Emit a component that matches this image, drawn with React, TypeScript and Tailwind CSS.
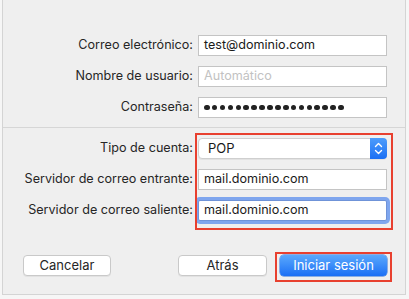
import React from "react";

const FONT = { fontFamily: "Inter, 'Liberation Sans', sans-serif" };

function Row({ label, children }: { label: string; children: React.ReactNode }) {
  return (
    <div className="flex items-center h-[21px]">
      <div className="w-[195px] text-right pr-[5px] text-[12.6px] text-[#262626] leading-none">{label}</div>
      {children}
    </div>
  );
}

function Field({ value, placeholder }: { value?: string; placeholder?: string }) {
  return (
    <div className="w-[189px] h-[21px] bg-white border border-[#c4c4c4] flex items-center px-[5px] text-[12.6px] leading-none">
      {value ? (
        <span className="text-[#1a1a1a]">{value}</span>
      ) : (
        <span className="text-[#c2c2c2]">{placeholder}</span>
      )}
    </div>
  );
}

function Button({ label, primary }: { label: string; primary?: boolean }) {
  return (
    <div
      className={
        primary
          ? "h-[21px] rounded-[4px] bg-gradient-to-b from-[#5aa8fc] to-[#1b6ff5] text-white text-[13px] flex items-center justify-center shadow-[0_0_0_0.5px_#2a6fd8]"
          : "h-[21px] rounded-[4px] bg-white border border-[#c9c9c9] text-[#262626] text-[13px] flex items-center justify-center shadow-[0_1px_0_rgba(0,0,0,0.05)]"
      }
    >
      {label}
    </div>
  );
}

export default function App() {
  return (
    <div style={FONT} className="w-[409px] h-[299px] bg-[#f6f6f6] pl-[2px] pr-[3px] pb-[4px]">
      <div className="h-full bg-[#efefef] border-x border-b border-[#d4d4d4] flex flex-col">
        {/* account */}
        <div className="pt-[35px] pb-[9px] flex flex-col gap-[10px] border-b border-[#d6d6d6]">
          <Row label="Correo electrónico:">
            <Field value="test@dominio.com" />
          </Row>
          <Row label="Nombre de usuario:">
            <Field placeholder="Automático" />
          </Row>
          <Row label="Contraseña:">
            <div className="w-[189px] h-[21px] bg-white border border-[#c4c4c4] flex items-center px-[5px] gap-[2.3px]">
              {Array.from({ length: 18 }).map((_, i) => (
                <span key={i} className="w-[5.6px] h-[5.6px] rounded-full bg-[#222]" />
              ))}
            </div>
          </Row>
        </div>

        {/* servers */}
        <div className="relative pt-[10px] flex flex-col gap-[10px]">
          <Row label="Tipo de cuenta:">
            <div className="w-[189px] h-[21px] bg-white rounded-[4px] border border-[#cfcfcf] flex items-center shadow-[0_1px_0_rgba(0,0,0,0.05)]">
              <span className="flex-1 pl-[9px] text-[13px] text-[#1a1a1a] leading-none">POP</span>
              <div className="w-[17px] h-[21px] -mr-px rounded-r-[4px] bg-gradient-to-b from-[#4d9cfb] to-[#1a6ff4] flex items-center justify-center">
                <svg width="9" height="13" viewBox="0 0 9 13" fill="none" stroke="white" strokeWidth="1.4" strokeLinecap="round" strokeLinejoin="round">
                  <path d="M1.5 4.5 L4.5 1.5 L7.5 4.5" />
                  <path d="M1.5 8.5 L4.5 11.5 L7.5 8.5" />
                </svg>
              </div>
            </div>
          </Row>
          <Row label="Servidor de correo entrante:">
            <Field value="mail.dominio.com" />
          </Row>
          <Row label="Servidor de correo saliente:">
            <div className="w-[189px] h-[21px] rounded-[2px] shadow-[0_0_0_3px_#7fa6ee] bg-white border border-[#6f93d8] flex items-center px-[5px] text-[12.6px] leading-none">
              <span className="text-[#1a1a1a]">mail.dominio.com</span>
            </div>
          </Row>
          <div className="absolute left-[192px] top-[5px] w-[198px] h-[97px] border-2 border-[#e8402f] pointer-events-none" />
        </div>

        {/* buttons */}
        <div className="mt-auto mb-[18px] flex items-center pl-[20px]">
          <div className="w-[88px]">
            <Button label="Cancelar" />
          </div>
          <div className="w-[89px] ml-[67px]">
            <Button label="Atrás" />
          </div>
          <div className="relative ml-[13px] w-[107px]">
            <Button label="Iniciar sesión" primary />
            <div className="absolute -left-[5px] -top-[3px] w-[117px] h-[30px] border-2 border-[#e8402f] pointer-events-none" />
          </div>
        </div>
      </div>
    </div>
  );
}
